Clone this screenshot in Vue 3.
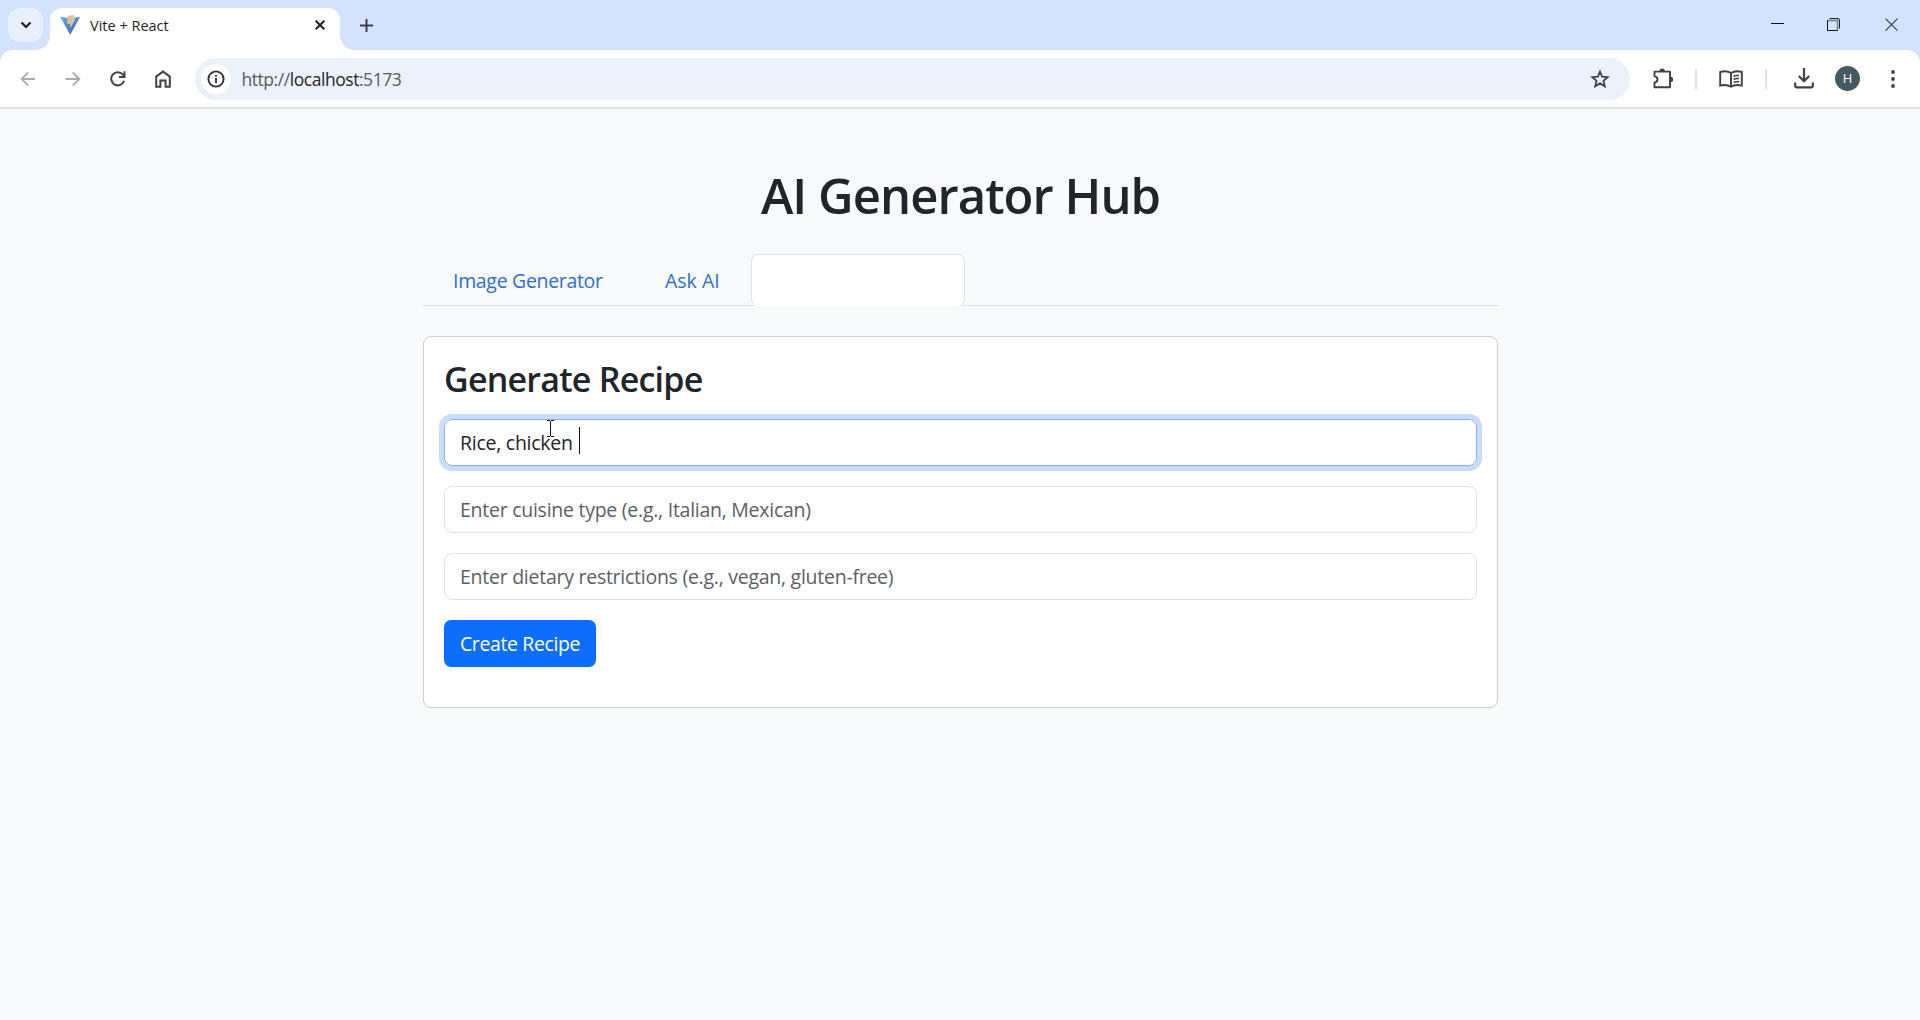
<script setup>
const fields = [
  { text: 'Rice, chicken', focused: true, cls: 'rice' },
  { text: 'Enter cuisine type (e.g., Italian, Mexican)', focused: false, cls: 'cuisine' },
  { text: 'Enter dietary restrictions (e.g., vegan, gluten-free)', focused: false, cls: 'dietary' },
]
</script>

<template>
  <div class="browser">
    <header class="strip">
      <button class="search-tabs" aria-label="Search tabs">
        <svg width="12" height="8" viewBox="0 0 12 8"><path d="M1.5 1.5 6 6l4.500-4.500" fill="none" stroke="#1f1f1f" stroke-width="2.200" /></svg>
      </button>
      <div class="tab">
        <svg class="favicon" width="20" height="20" viewBox="0 0 20 20">
          <defs>
            <linearGradient id="vite" x1="0" y1="0" x2="1" y2="1"><stop offset="0" stop-color="#62b5ee" /><stop offset="1" stop-color="#3558a8" /></linearGradient>
          </defs>
          <path d="M0 1.500 10 3.500 20 2 10.200 19.700Z" fill="url(#vite)" />
          <path d="m8 .8 6-.8 1 4.800-.8 1.700-3.700 6.500-.5-4-3.200-.6Z" fill="#dcc39b" />
        </svg>
        <span class="tab-title"><span>Vite + React</span></span>
        <svg class="tab-close" width="10" height="10" viewBox="0 0 10 10"><path d="m.7.7 8.600 8.600M9.300.7.7 9.300" stroke="#1f1f1f" stroke-width="2" /></svg>
      </div>
      <svg class="plus" width="13" height="13" viewBox="0 0 13 13"><path d="M6.500 0v13M0 6.500h13" stroke="#3c4043" stroke-width="2" /></svg>
      <div class="window-buttons">
        <svg width="13" height="14" viewBox="0 0 13 14"><path d="M0 5.500h13" stroke="#111" /></svg>
        <svg width="13" height="14" viewBox="0 0 13 14"><path d="M.5 2.500h10v10H.5Z" fill="none" stroke="#111" /><path d="M2.500.5H11q1.500 0 1.500 1.500v8.500" fill="none" stroke="#222" /><path d="M1 2.500h9.500v9.500" fill="none" stroke="#737a87" stroke-width="1.500" /></svg>
        <svg width="13" height="14" viewBox="0 0 13 14"><path d="m.5.700 12 12M12.500.7l-12 12" stroke="#333c48" stroke-width="1.200" /></svg>
      </div>
    </header>

    <nav class="toolbar">
      <svg class="back" width="16" height="16" viewBox="0 0 16 16"><path d="M15 8H2M8.300 1.300 1.600 8l6.700 6.700" fill="none" stroke="#aaabad" stroke-width="1.800" /></svg>
      <svg class="forward" width="16" height="16" viewBox="0 0 16 16"><path d="M.5 8H14M7.700 1.300 14.400 8l-6.700 6.700" fill="none" stroke="#aaabad" stroke-width="1.800" /></svg>
      <svg class="reload" width="16" height="16" viewBox="0 0 16 16"><path d="M14.100 9.800A6.600 6.600 0 1 1 12.800 3.400l1.400 1.800" fill="none" stroke="#404346" stroke-width="2" /><path d="M14.500.3v5.700H8.900" fill="none" stroke="#404346" stroke-width="2" /></svg>
      <svg class="home" width="16" height="18" viewBox="0 0 16 18"><path d="M1.200 6.600 8 1.400l6.800 5.200v10.200h-4.200v-6.300H5.400v6.300H1.200Z" fill="none" stroke="#404346" stroke-width="2" /></svg>
      <div class="omnibox">
        <span class="site-info">
          <svg width="18" height="18" viewBox="0 0 18 18"><circle cx="9" cy="9" r="7.600" fill="none" stroke="#303236" stroke-width="1.900" /><path d="M9 8v5M9 5v1.800" stroke="#303236" stroke-width="1.900" /></svg>
        </span>
        <span class="url"><i>http://</i>localhost<i>:5173</i></span>
        <svg class="star" width="20" height="20" viewBox="0 0 20 20"><path d="m10 2.500 2.100 5.100 5.600.5-4.200 3.700 1.300 5.500-4.800-2.900-4.800 2.900 1.300-5.500-4.200-3.700 5.600-.5Z" fill="none" stroke="#404346" stroke-width="1.800" /></svg>
      </div>
      <svg class="puzzle" width="22" height="22" viewBox="0 0 22 22"><path d="M2.500 3.600h15.500v15.700H2.500v-4.700q3-.9 3-3.200t-3-3.200Z" fill="none" stroke="#404346" stroke-width="1.900" stroke-linejoin="round" /><path d="M7.500 3a2.700 2.500 0 0 1 5.400 0ZM18.600 8.700a2.500 2.700 0 0 1 0 5.400Z" fill="#404346" /></svg>
      <span class="divider first"></span>
      <svg class="book" width="24" height="18" viewBox="0 0 24 18"><path d="M12 3C9 1 5 .8 1.200 2v13.700c3.800-1 7.800-.8 10.800 1.100 3-1.900 7-2.100 10.800-1.100V2C19 .8 15 1 12 3Zm0 0v13.500" fill="none" stroke="#404346" stroke-width="1.900" /><path d="M14.500 6.200q2.500-1 5.500-.7M14.500 9.300q2.500-1 5.500-.7M14.500 12.400q2.500-1 5.500-.7" fill="none" stroke="#404346" stroke-width="1.500" /></svg>
      <span class="divider second"></span>
      <svg class="download" width="20" height="21" viewBox="0 0 20 21"><path d="M10 0v13M4.800 8 10 13.200 15.200 8M1.200 14.500v3.300q0 1.500 1.500 1.500h14.600q1.500 0 1.500-1.500v-3.300" fill="none" stroke="#404346" stroke-width="2.200" /></svg>
      <span class="avatar">H</span>
      <svg class="menu" width="4" height="18" viewBox="0 0 4 18"><g fill="#404346"><circle cx="2" cy="2" r="1.900" /><circle cx="2" cy="9" r="1.900" /><circle cx="2" cy="16" r="1.900" /></g></svg>
    </nav>

    <main class="page">
      <h1><span>AI Generator Hub</span></h1>
      <ul class="nav-tabs">
        <li class="image-gen"><span>Image Generator</span></li>
        <li class="ask"><span>Ask AI</span></li>
        <li class="active"></li>
      </ul>
      <section class="card">
        <h2><span>Generate Recipe</span></h2>
        <div v-for="f in fields" :key="f.cls" class="field" :class="{ focused: f.focused }">
          <span :class="f.cls">{{ f.text }}</span>
          <span v-if="f.focused" class="caret"></span>
          <svg v-if="f.focused" class="pointer" width="7" height="17" viewBox="0 0 7 17"><path d="M0 .5h3M4 .5h3M3.500 1v15M0 16.500h3M4 16.500h3" stroke="#111" fill="none" /></svg>
        </div>
        <button class="create"><span>Create Recipe</span></button>
      </section>
    </main>
  </div>
</template>

<style>
body { background: #f8f9fb; overflow: hidden; }
</style>

<style scoped>
* { box-sizing: border-box; }
svg { display: block; flex: none; }
button { border: 0; padding: 0; font: inherit; }
.browser { height: 1020px; font-family: "Open Sans", "Noto Sans", sans-serif; color: #212529; background: #f8f9fb; display: flex; flex-direction: column; overflow: hidden; }
.strip { height: 50px; flex: none; display: flex; background: #d3e2fd; padding: 8px 22px 0 8px; }
.search-tabs { width: 35px; height: 34px; border-radius: 12px; background: #e8effd; display: grid; place-items: center; }
.tab { position: relative; width: 290px; height: 42px; margin-left: 7px; background: #fff; border-radius: 12px 12px 0 0; display: flex; align-items: center; padding: 0 15px 8px 10px; }
.tab::before, .tab::after { content: ""; position: absolute; bottom: 0; width: 14px; height: 14px; }
.tab::before { left: -14px; background: radial-gradient(circle at 0 0, transparent 13.500px, #fff 14px); }
.tab::after { right: -14px; background: radial-gradient(circle at 100% 0, transparent 13.500px, #fff 14px); }
.tab-title { font-size: 14.500px; line-height: 20px; padding-top: 1px; color: #1f1f1f; margin-left: 10px; white-space: nowrap; }
.tab-close { margin-left: auto; }
.plus { margin: 11px 0 0 20px; }
.window-buttons { margin: 10px 0 0 auto; display: flex; }
.window-buttons svg + svg { margin-left: 43px; }
.window-buttons svg:last-child { margin-left: 45px; }
.toolbar { height: 59px; flex: none; display: flex; align-items: center; background: radial-gradient(circle at 12px 12px, #fff 11.500px, #d3e2fd 12px) 0 0 / 12px 12px no-repeat, radial-gradient(circle at 0 12px, #fff 11.500px, #d3e2fd 12px) 100% 0 / 12px 12px no-repeat, #fff; border-bottom: 2px solid #dfe0e2; padding: 0 25px 0 20px; }
.back { margin-left: -.5px; }
.forward { margin-left: 29px; }
.reload { margin-left: 29px; }
.home { margin-left: 29px; }
.omnibox { width: 1435px; height: 42px; margin-left: 24.500px; border-radius: 21px; background: #eaf1fb; display: flex; align-items: center; padding: 0 20px 0 6px; }
.site-info { width: 30px; height: 30px; border-radius: 50%; background: #fff; display: grid; place-items: center; }
.url { font-size: 17.500px; letter-spacing: -.45px; color: #24272b; margin-left: 10.500px; line-height: 26px; white-space: nowrap; }
.url i { font-style: normal; color: #575c63; }
.star { margin-left: auto; }
.puzzle { margin-left: 22px; }
.divider { width: 2px; height: 20px; background: #d3e2fd; }
.divider.first { margin-left: 21px; }
.book { margin-left: 22px; }
.divider.second { margin-left: 22px; }
.download { margin-left: 27px; }
.avatar { width: 25px; height: 25px; border-radius: 50%; background: #455a64; color: #fff; font-size: 13px; font-weight: 500; line-height: 25px; text-align: center; margin-left: 21px; }
.menu { margin-left: auto; }
.page { width: 1075px; margin: 0 0 0 423px; }
h1 { margin: 56px 0 0; height: 60px; font-size: 49px; line-height: 60px; font-weight: 600; text-align: center; white-space: nowrap; letter-spacing: -.95px; }
.nav-tabs { list-style: none; margin: 29px 0 0; padding: 0; height: 52px; display: flex; border-bottom: 1px solid #dee2e6; font-size: 19.500px; line-height: 30px; color: #2f6fca; white-space: nowrap; }
.nav-tabs li { flex: none; padding: 12px 0 0 30px; }
.image-gen { width: 211px; letter-spacing: -.32px; }
.nav-tabs .ask { width: 117px; padding-left: 31px; }
.nav-tabs .active { width: 214px; height: 52px; background: #fff; border: 1px solid #dee2e6; border-bottom-color: #fff; border-radius: 7px; }
.card { height: 372px; margin-top: 30px; padding: 21px 20px 0; border: 1px solid #cbced2; border-radius: 8px; background: #fff; }
h2 { margin: 0 0 17px; height: 44px; font-size: 34px; line-height: 43px; font-weight: 600; white-space: nowrap; letter-spacing: -.78px; }
.field { position: relative; height: 47px; border: 1px solid #dee2e6; border-radius: 8px; margin-bottom: 20px; padding: 0 15px; display: flex; align-items: center; font-size: 19.500px; line-height: 30px; color: #5b6066; white-space: nowrap; letter-spacing: -.26px; }
.field.focused { border-color: #86b0f0; box-shadow: 0 0 0 5px #cbdcfb; color: #212529; }
.caret { width: 1px; height: 27px; background: #111; margin: -4px 0 0 6px; }
.pointer { position: absolute; left: 102px; top: 0; }
.create { width: 152px; height: 47px; border-radius: 7px; background: #0d6efd; color: #fff; font-size: 19.500px; line-height: 30px; white-space: nowrap; letter-spacing: -.38px; }
</style>
